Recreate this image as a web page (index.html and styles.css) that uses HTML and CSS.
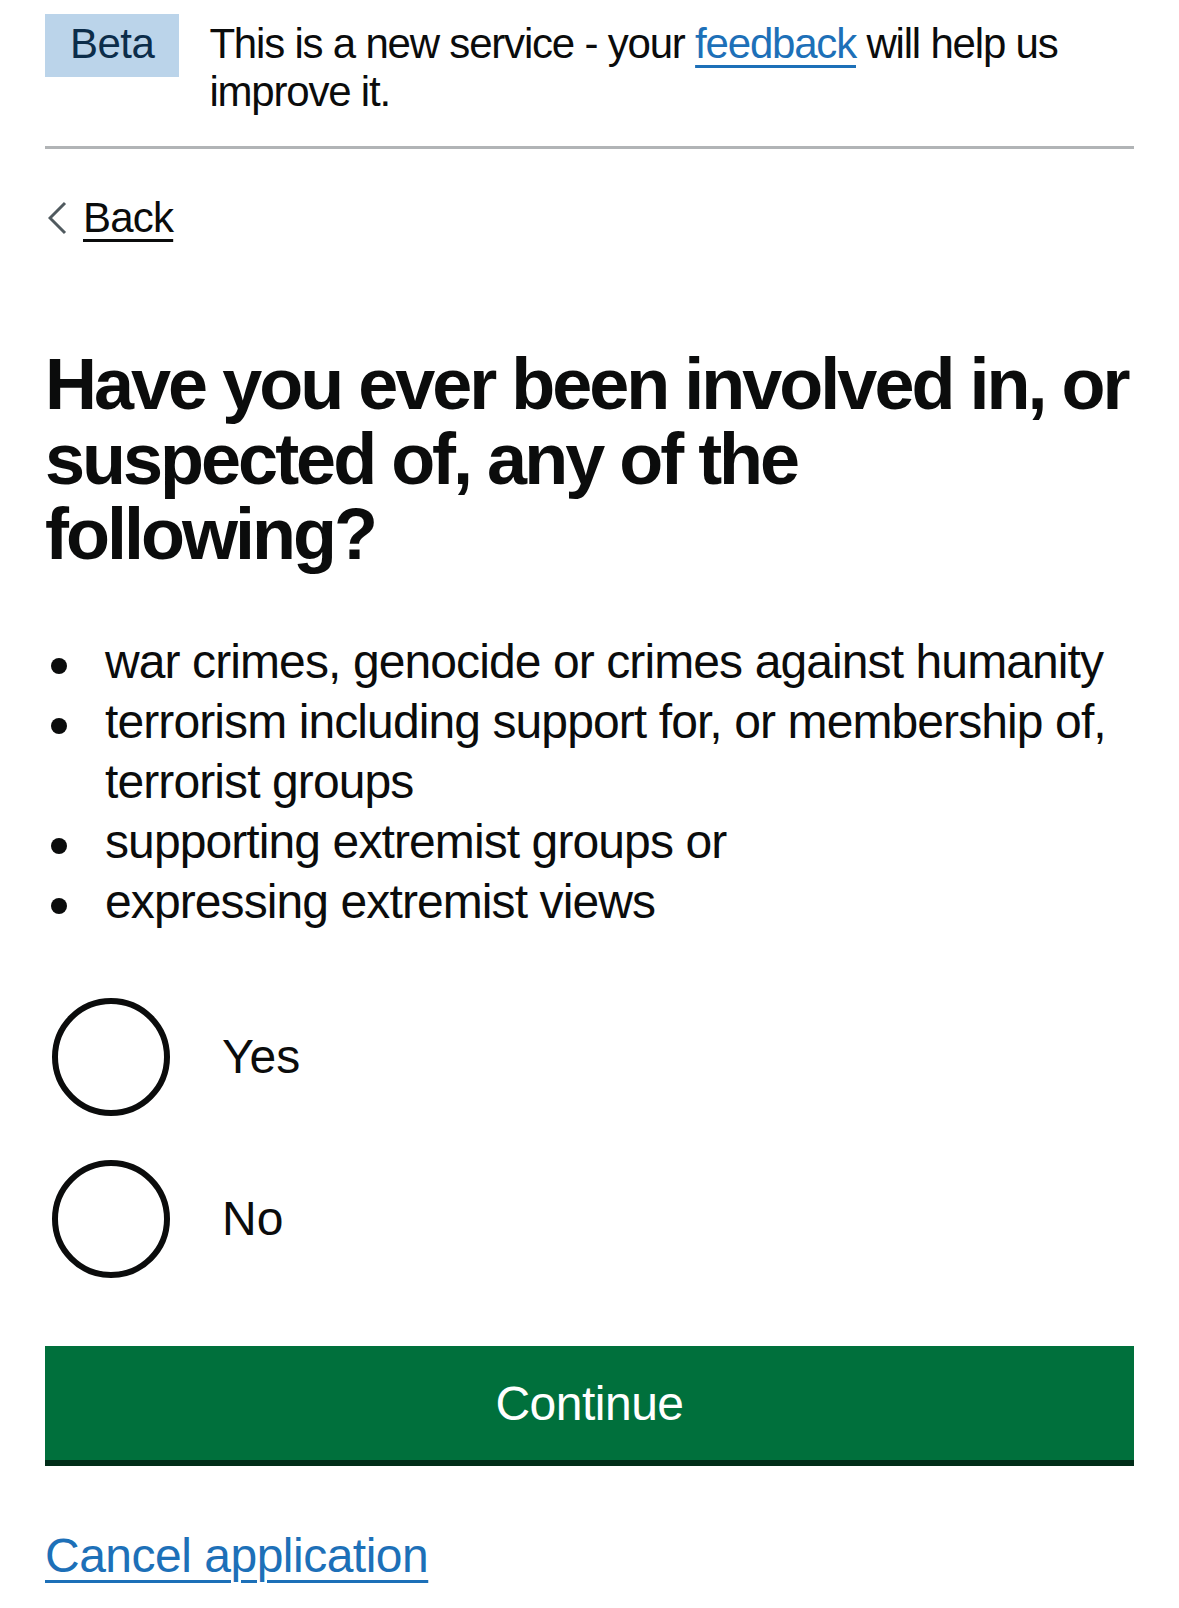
FILE: index.html
```html
<!DOCTYPE html>
<html lang="en">
<head>
<meta charset="utf-8">
<title>Have you ever been involved in, or suspected of, any of the following?</title>
<link rel="stylesheet" href="styles.css">
</head>
<body>
<div class="page">
  <div class="phase-banner">
    <p class="phase-content">
      <strong class="tag">Beta</strong>
      <span class="phase-text">This is a new service - your <a class="link" href="#">feedback</a> will help us <span class="phase-end">improve it.</span></span>
    </p>
  </div>

  <a class="back-link" href="#">
    <svg class="back-chevron" width="20" height="34" viewBox="0 0 20 34" aria-hidden="true"><polyline points="17,2 2,17 17,32" fill="none" stroke="#505a5f" stroke-width="3"/></svg>
    <span class="back-text">Back</span>
  </a>

  <main class="main">
    <h1 class="heading">Have you ever been involved in, or suspected of, any of the following?</h1>

    <ul class="list">
      <li>war crimes, genocide or crimes against humanity</li>
      <li>terrorism including support for, or membership of, terrorist groups</li>
      <li>supporting extremist groups or</li>
      <li>expressing extremist views</li>
    </ul>

    <div class="radios">
      <label class="radio">
        <span class="radio-circle"></span>
        <span class="radio-label">Yes</span>
      </label>
      <label class="radio">
        <span class="radio-circle"></span>
        <span class="radio-label">No</span>
      </label>
    </div>

    <button class="button" type="button">Continue</button>

    <p class="cancel"><a class="link" href="#">Cancel application</a></p>
  </main>
</div>
</body>
</html>
```

FILE: styles.css
```css
html, body {
  margin: 0;
  padding: 0;
  background: #ffffff;
}

body {
  font-family: "Liberation Sans", Arial, sans-serif;
  color: #0b0c0c;
}

.page {
  padding: 0 45px;
}

.phase-banner {
  padding-top: 14px;
  padding-bottom: 30px;
  border-bottom: 3px solid #b1b4b6;
}

.phase-content {
  display: flex;
  align-items: baseline;
  margin: 0;
  font-size: 42px;
  line-height: 48px;
}

.tag {
  flex: none;
  font-weight: 400;
  background: #bbd4ea;
  color: #0c2d4a;
  padding: 6px 25px 9px;
  margin-right: 30px;
  letter-spacing: -0.5px;
}

.phase-text {
  letter-spacing: -1.2px;
}

.phase-end {
  white-space: nowrap;
}

.link {
  color: #1d70b8;
  text-decoration: underline;
  text-decoration-thickness: 3px;
  text-underline-offset: 0.1578em;
}

.back-link {
  display: flex;
  align-items: center;
  width: max-content;
  margin-top: 45px;
  margin-bottom: 45px;
  font-size: 42px;
  line-height: 48px;
  color: #0b0c0c;
  text-decoration: none;
}

.back-chevron {
  display: block;
  margin-left: 3px;
  margin-right: 15px;
}

.back-text {
  text-decoration: underline;
  text-decoration-thickness: 3px;
  text-underline-offset: 0.1578em;
  letter-spacing: -0.8px;
}

.main {
  padding-top: 60px;
}

.heading {
  margin: 0 0 60px;
  font-size: 72px;
  line-height: 75px;
  font-weight: 700;
  letter-spacing: -3px;
}

.list {
  margin: 0 0 65px;
  padding-left: 60px;
  list-style: none;
  font-size: 48px;
  line-height: 60px;
  letter-spacing: -0.9px;
}

.list li {
  position: relative;
}

.list li::before {
  content: "";
  position: absolute;
  top: 26px;
  left: -54px;
  width: 16px;
  height: 16px;
  border-radius: 50%;
  background: #0b0c0c;
}

.radios {
  display: flex;
  flex-direction: column;
  gap: 42px;
  margin-bottom: 67px;
}

.radio {
  display: flex;
  align-items: center;
  height: 120px;
}

.radio-circle {
  flex: none;
  box-sizing: border-box;
  width: 118px;
  height: 118px;
  margin-left: 7px;
  border: 6px solid #0b0c0c;
  border-radius: 50%;
}

.radio-label {
  margin-left: 52px;
  font-size: 48px;
  line-height: 60px;
}

.button {
  display: block;
  width: 100%;
  height: 114px;
  margin: 0 0 66px;
  padding: 0;
  border: 0;
  border-radius: 0;
  background: #00703c;
  box-shadow: 0 6px 0 #002d18;
  color: #ffffff;
  font-family: "Liberation Sans", Arial, sans-serif;
  font-size: 48px;
  line-height: 57px;
  letter-spacing: -0.5px;
}

.cancel {
  margin: 0;
  font-size: 48px;
  line-height: 60px;
  letter-spacing: -0.5px;
}
```
